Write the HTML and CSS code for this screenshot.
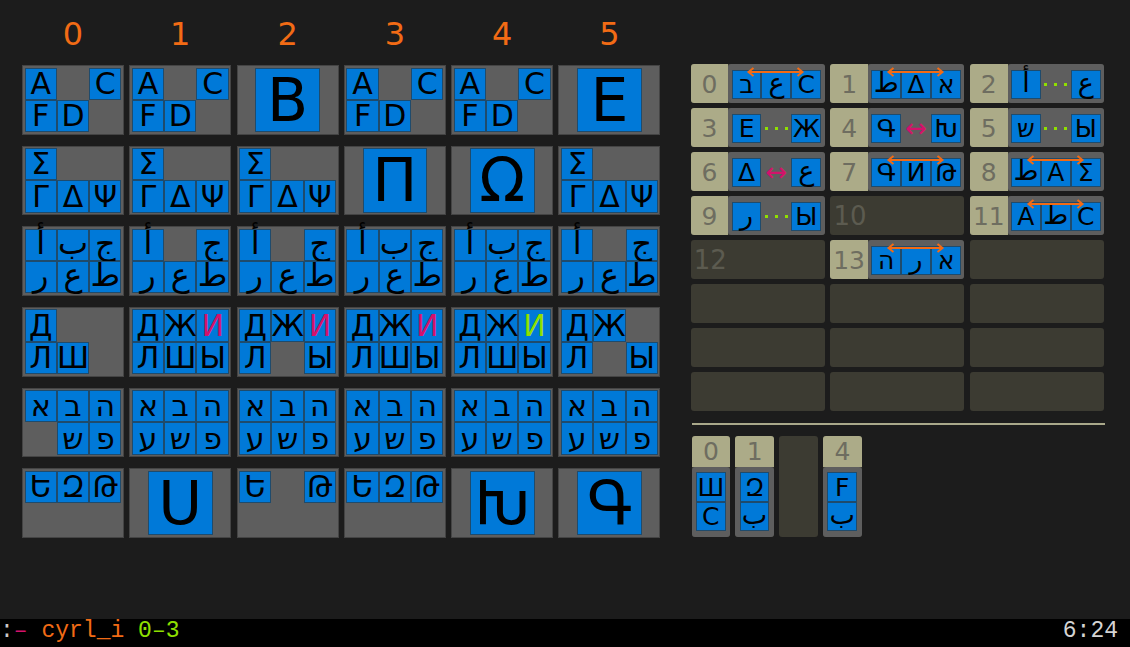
FILE: index.html
```html
<!DOCTYPE html>
<html lang="en">
<head>
<meta charset="utf-8">
<title>cyrl_i</title>
<link rel="stylesheet" href="styles.css">
</head>
<body>
<div class="main">
  <section class="left">
    <div class="heads">
      <div class="head">0</div><div class="head">1</div><div class="head">2</div>
      <div class="head">3</div><div class="head">4</div><div class="head">5</div>
    </div>
    <div class="cards">
      <!-- row 0 -->
      <div class="card"><span class="t">A</span><span class="e"></span><span class="t">C</span><span class="t">F</span><span class="t">D</span><span class="e"></span></div>
      <div class="card"><span class="t">A</span><span class="e"></span><span class="t">C</span><span class="t">F</span><span class="t">D</span><span class="e"></span></div>
      <div class="card big"><span class="t">B</span></div>
      <div class="card"><span class="t">A</span><span class="e"></span><span class="t">C</span><span class="t">F</span><span class="t">D</span><span class="e"></span></div>
      <div class="card"><span class="t">A</span><span class="e"></span><span class="t">C</span><span class="t">F</span><span class="t">D</span><span class="e"></span></div>
      <div class="card big"><span class="t">E</span></div>
      <!-- row 1 -->
      <div class="card"><span class="t">Σ</span><span class="e"></span><span class="e"></span><span class="t">Γ</span><span class="t">Δ</span><span class="t">Ψ</span></div>
      <div class="card"><span class="t">Σ</span><span class="e"></span><span class="e"></span><span class="t">Γ</span><span class="t">Δ</span><span class="t">Ψ</span></div>
      <div class="card"><span class="t">Σ</span><span class="e"></span><span class="e"></span><span class="t">Γ</span><span class="t">Δ</span><span class="t">Ψ</span></div>
      <div class="card big"><span class="t">Π</span></div>
      <div class="card big"><span class="t">Ω</span></div>
      <div class="card"><span class="t">Σ</span><span class="e"></span><span class="e"></span><span class="t">Γ</span><span class="t">Δ</span><span class="t">Ψ</span></div>
      <!-- row 2 -->
      <div class="card"><span class="t ar">أ</span><span class="t ar">ب</span><span class="t ar">ج</span><span class="t ar">ر</span><span class="t ar">ع</span><span class="t ar">ط</span></div>
      <div class="card"><span class="t ar">أ</span><span class="e"></span><span class="t ar">ج</span><span class="t ar">ر</span><span class="t ar">ع</span><span class="t ar">ط</span></div>
      <div class="card"><span class="t ar">أ</span><span class="e"></span><span class="t ar">ج</span><span class="t ar">ر</span><span class="t ar">ع</span><span class="t ar">ط</span></div>
      <div class="card"><span class="t ar">أ</span><span class="t ar">ب</span><span class="t ar">ج</span><span class="t ar">ر</span><span class="t ar">ع</span><span class="t ar">ط</span></div>
      <div class="card"><span class="t ar">أ</span><span class="t ar">ب</span><span class="t ar">ج</span><span class="t ar">ر</span><span class="t ar">ع</span><span class="t ar">ط</span></div>
      <div class="card"><span class="t ar">أ</span><span class="e"></span><span class="t ar">ج</span><span class="t ar">ر</span><span class="t ar">ع</span><span class="t ar">ط</span></div>
      <!-- row 3 -->
      <div class="card"><span class="t">Д</span><span class="e"></span><span class="e"></span><span class="t">Л</span><span class="t">Ш</span><span class="e"></span></div>
      <div class="card"><span class="t">Д</span><span class="t">Ж</span><span class="t pink">И</span><span class="t">Л</span><span class="t">Ш</span><span class="t">Ы</span></div>
      <div class="card"><span class="t">Д</span><span class="t">Ж</span><span class="t pink">И</span><span class="t">Л</span><span class="e"></span><span class="t">Ы</span></div>
      <div class="card"><span class="t">Д</span><span class="t">Ж</span><span class="t pink">И</span><span class="t">Л</span><span class="t">Ш</span><span class="t">Ы</span></div>
      <div class="card"><span class="t">Д</span><span class="t">Ж</span><span class="t green">И</span><span class="t">Л</span><span class="t">Ш</span><span class="t">Ы</span></div>
      <div class="card"><span class="t">Д</span><span class="t">Ж</span><span class="e"></span><span class="t">Л</span><span class="e"></span><span class="t">Ы</span></div>
      <!-- row 4 -->
      <div class="card"><span class="t">א</span><span class="t">ב</span><span class="t">ה</span><span class="e"></span><span class="t">ש</span><span class="t">פ</span></div>
      <div class="card"><span class="t">א</span><span class="t">ב</span><span class="t">ה</span><span class="t">ע</span><span class="t">ש</span><span class="t">פ</span></div>
      <div class="card"><span class="t">א</span><span class="t">ב</span><span class="t">ה</span><span class="t">ע</span><span class="t">ש</span><span class="t">פ</span></div>
      <div class="card"><span class="t">א</span><span class="t">ב</span><span class="t">ה</span><span class="t">ע</span><span class="t">ש</span><span class="t">פ</span></div>
      <div class="card"><span class="t">א</span><span class="t">ב</span><span class="t">ה</span><span class="t">ע</span><span class="t">ש</span><span class="t">פ</span></div>
      <div class="card"><span class="t">א</span><span class="t">ב</span><span class="t">ה</span><span class="t">ע</span><span class="t">ש</span><span class="t">פ</span></div>
      <!-- row 5 -->
      <div class="card"><span class="t">Ե</span><span class="t">Զ</span><span class="t">Թ</span><span class="e"></span><span class="e"></span><span class="e"></span></div>
      <div class="card big"><span class="t">Ս</span></div>
      <div class="card"><span class="t">Ե</span><span class="e"></span><span class="t">Թ</span><span class="e"></span><span class="e"></span><span class="e"></span></div>
      <div class="card"><span class="t">Ե</span><span class="t">Զ</span><span class="t">Թ</span><span class="e"></span><span class="e"></span><span class="e"></span></div>
      <div class="card big"><span class="t">Խ</span></div>
      <div class="card big"><span class="t">Գ</span></div>
    </div>
  </section>

  <section class="right">
    <div class="grid">
      <div class="cell"><div class="idx">0</div><div class="tiles"><span class="t">ב</span><span class="t ar">ع</span><span class="t">C</span><svg class="arr" viewBox="0 0 57 10"><path d="M1 5H56M6.5 1L1.5 5L6.5 9M50.5 1L55.5 5L50.5 9"/></svg></div></div>
      <div class="cell"><div class="idx">1</div><div class="tiles"><span class="t ar">ط</span><span class="t">Δ</span><span class="t">א</span><svg class="arr" viewBox="0 0 57 10"><path d="M1 5H56M6.5 1L1.5 5L6.5 9M50.5 1L55.5 5L50.5 9"/></svg></div></div>
      <div class="cell"><div class="idx">2</div><div class="tiles"><span class="t ar">أ</span><span class="dots"><i></i><i></i><i></i></span><span class="t ar">ع</span></div></div>

      <div class="cell"><div class="idx">3</div><div class="tiles"><span class="t">Е</span><span class="dots"><i></i><i></i><i></i></span><span class="t">Ж</span></div></div>
      <div class="cell"><div class="idx">4</div><div class="tiles"><span class="t">Գ</span><span class="swap">↔</span><span class="t">Խ</span></div></div>
      <div class="cell"><div class="idx">5</div><div class="tiles"><span class="t">ש</span><span class="dots"><i></i><i></i><i></i></span><span class="t">Ы</span></div></div>

      <div class="cell"><div class="idx">6</div><div class="tiles"><span class="t">Δ</span><span class="swap">↔</span><span class="t ar">ع</span></div></div>
      <div class="cell"><div class="idx">7</div><div class="tiles"><span class="t">Գ</span><span class="t">И</span><span class="t">Թ</span><svg class="arr" viewBox="0 0 57 10"><path d="M1 5H56M6.5 1L1.5 5L6.5 9M50.5 1L55.5 5L50.5 9"/></svg></div></div>
      <div class="cell"><div class="idx">8</div><div class="tiles"><span class="t ar">ط</span><span class="t">A</span><span class="t">Σ</span><svg class="arr" viewBox="0 0 57 10"><path d="M1 5H56M6.5 1L1.5 5L6.5 9M50.5 1L55.5 5L50.5 9"/></svg></div></div>

      <div class="cell"><div class="idx">9</div><div class="tiles"><span class="t ar">ر</span><span class="dots"><i></i><i></i><i></i></span><span class="t">Ы</span></div></div>
      <div class="cell empty"><span class="num">10</span></div>
      <div class="cell"><div class="idx">11</div><div class="tiles"><span class="t">A</span><span class="t ar">ط</span><span class="t">C</span><svg class="arr" viewBox="0 0 57 10"><path d="M1 5H56M6.5 1L1.5 5L6.5 9M50.5 1L55.5 5L50.5 9"/></svg></div></div>

      <div class="cell empty"><span class="num">12</span></div>
      <div class="cell"><div class="idx">13</div><div class="tiles"><span class="t">ה</span><span class="t ar">ر</span><span class="t">א</span><svg class="arr" viewBox="0 0 57 10"><path d="M1 5H56M6.5 1L1.5 5L6.5 9M50.5 1L55.5 5L50.5 9"/></svg></div></div>
      <div class="cell empty"></div>

      <div class="cell empty"></div><div class="cell empty"></div><div class="cell empty"></div>
      <div class="cell empty"></div><div class="cell empty"></div><div class="cell empty"></div>
      <div class="cell empty"></div><div class="cell empty"></div><div class="cell empty"></div>
    </div>

    <div class="sep"></div>

    <div class="vrow">
      <div class="vcard"><div class="vidx">0</div><div class="vtiles"><span class="t">Ш</span><span class="t">C</span></div></div>
      <div class="vcard"><div class="vidx">1</div><div class="vtiles"><span class="t">Զ</span><span class="t ar">ب</span></div></div>
      <div class="vcard empty"></div>
      <div class="vcard"><div class="vidx">4</div><div class="vtiles"><span class="t">F</span><span class="t ar">ب</span></div></div>
    </div>
  </section>
</div>

<footer class="status">
  <div class="status-left"><span class="s-colon">:</span><span class="s-dash">–</span> <span class="s-name">cyrl_i</span> <span class="s-range">0–3</span></div>
  <div class="status-right">6:24</div>
</footer>
</body>
</html>
```

FILE: styles.css
```css
* {
  box-sizing: border-box;
}

html,
body {
  margin: 0;
  padding: 0;
}

body {
  width: 1130px;
  height: 647px;
  overflow: hidden;
  background: #1c1c1c;
  font-family: "DejaVu Sans", "Noto Sans", sans-serif;
  display: flex;
  flex-direction: column;
}

.main {
  flex: 1;
  display: flex;
  padding-left: 22px;
}

/* ---------- left grid ---------- */

.left {
  width: 638.5px;
}

.heads {
  display: grid;
  grid-template-columns: repeat(6, 102px);
  column-gap: 5.3px;
  height: 65px;
  padding-top: 4px;
}

.head {
  text-align: center;
  color: #f26b15;
  font-size: 32px;
  line-height: 61px;
}

.cards {
  display: grid;
  grid-template-columns: repeat(6, 102px);
  grid-auto-rows: 69.67px;
  column-gap: 5.3px;
  row-gap: 11px;
}

.card {
  background: #5e5e5e;
  border: 1px solid #444444;
  padding: 1.5px;
  display: grid;
  grid-template-columns: repeat(3, 1fr);
  grid-template-rows: repeat(2, 1fr);
}

.card.big {
  display: flex;
  align-items: center;
  justify-content: center;
}

.t {
  background: #0079d8;
  border: 1px solid #1f4b6c;
  color: #000;
  display: flex;
  align-items: center;
  justify-content: center;
  line-height: 1;
  font-size: 30px;
  min-width: 0;
  min-height: 0;
}

.t.ar {
  font-size: 32px;
  line-height: 0.8;
  padding-bottom: 3px;
}

.big .t {
  width: 64.67px;
  height: 64.67px;
  font-size: 60px;
}

.t.pink {
  color: #d3126b;
}

.t.green {
  color: #8fe000;
}

/* ---------- right panel ---------- */

.right {
  margin-left: 30.2px;
  width: 414px;
  padding-top: 64.3px;
}

.grid {
  display: grid;
  grid-template-columns: repeat(3, 134px);
  grid-auto-rows: 38.5px;
  column-gap: 5.7px;
  row-gap: 5.5px;
}

.cell {
  display: flex;
  border-radius: 3px;
  background: #3c3b32;
}

.idx {
  width: 37.5px;
  flex: none;
  background: #acab88;
  color: #6e6d60;
  font-size: 25px;
  line-height: 1;
  padding-top: 2px;
  border-radius: 3px 0 0 3px;
  display: flex;
  align-items: center;
  justify-content: center;
  white-space: nowrap;
}

.tiles {
  flex: 1;
  position: relative;
  background: #5e5e5e;
  border-radius: 3px;
  display: grid;
  grid-template-columns: repeat(3, 1fr);
  padding: 5.7px 3.4px 3.8px 3.4px;
}

.tiles .t,
.vtiles .t {
  font-size: 25px;
}

.tiles .t.ar,
.vtiles .t.ar {
  font-size: 27px;
}

.arr {
  position: absolute;
  left: 19px;
  top: 2.5px;
  width: 57px;
  height: 10px;
  overflow: visible;
}

.arr path {
  fill: none;
  stroke: #f26b15;
  stroke-width: 2;
}

.dots {
  display: flex;
  align-items: center;
  justify-content: center;
  gap: 7px;
}

.dots i {
  width: 3px;
  height: 3px;
  background: #8fe000;
}

.swap {
  display: flex;
  align-items: center;
  justify-content: center;
  color: #d3126b;
  font-size: 26px;
  line-height: 1;
}

.cell.empty {
  align-items: center;
}

.num {
  color: #5c5b50;
  font-size: 26px;
  line-height: 1;
  padding-left: 3px;
}

.sep {
  height: 1.5px;
  background: #a9a88a;
  margin: 12.5px 0 11px 1px;
}

.vrow {
  display: flex;
  gap: 5.3px;
  padding-left: 1px;
}

.vcard {
  width: 38.5px;
  height: 101.6px;
  border-radius: 3px;
  background: #3c3b32;
  display: flex;
  flex-direction: column;
}

.vidx {
  height: 31px;
  flex: none;
  background: #acab88;
  color: #6e6d60;
  font-size: 25px;
  line-height: 1;
  border-radius: 3px 3px 0 0;
  display: flex;
  align-items: center;
  justify-content: center;
}

.vtiles {
  flex: 1;
  background: #5e5e5e;
  border-radius: 3px;
  display: grid;
  grid-template-rows: repeat(2, 29.5px);
  padding: 5.6px 4.7px 0 4.3px;
}

/* ---------- status bar ---------- */

.status {
  height: 27.7px;
  flex: none;
  background: #000;
  display: flex;
  justify-content: space-between;
  font-family: "Liberation Mono", "DejaVu Sans Mono", monospace;
  font-size: 23px;
  line-height: 24px;
  padding-right: 12px;
  white-space: pre;
}

.s-colon {
  color: #c8c8c8;
}

.s-dash {
  color: #d3126b;
}

.s-name {
  color: #f26b15;
}

.s-range {
  color: #8fe000;
}

.status-right {
  color: #d4d4d4;
}
```
